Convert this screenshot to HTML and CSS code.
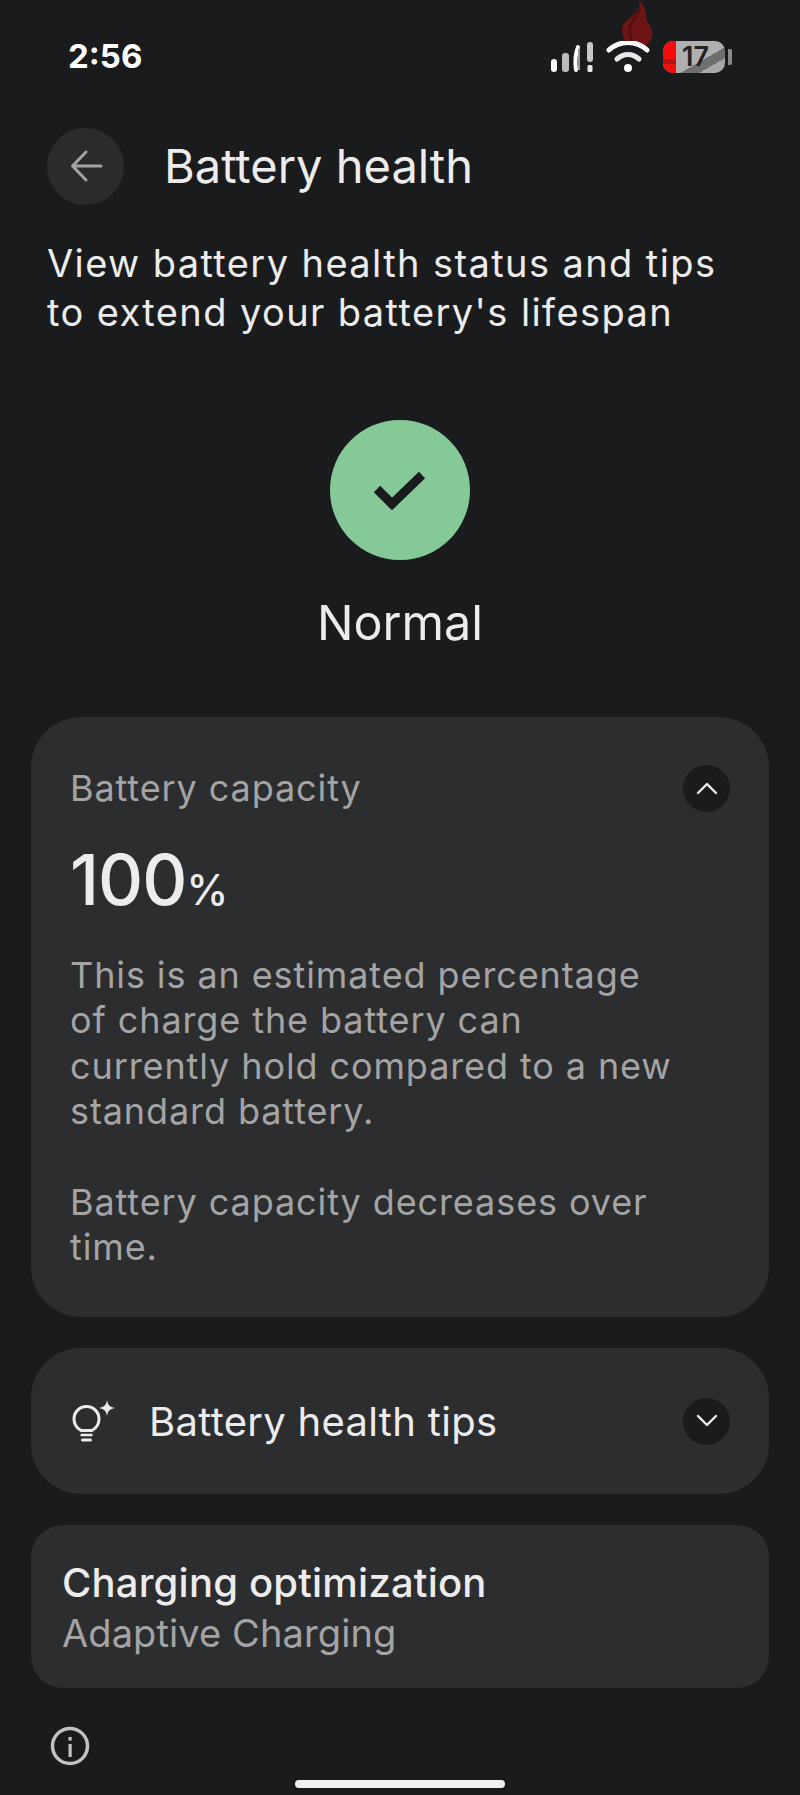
FILE: index.html
```html
<!DOCTYPE html>
<html lang="en">
<head>
<meta charset="utf-8">
<title>Battery health</title>
<link rel="stylesheet" href="styles.css">
</head>
<body>
<div class="screen">
  <div class="status">
    <span class="time">2:56</span>
    <div class="status-icons">
      <svg class="signal" width="44" height="32" viewBox="0 0 44 32">
        <rect x="1" y="18" width="6" height="13" rx="3" fill="#fff"/>
        <rect x="12" y="12" width="7" height="19" rx="3" fill="#bbb"/>
        <path d="M28 6C25 14 25 22 26 29" stroke="#fff" stroke-width="4" stroke-linecap="round" fill="none"/>
        <path d="M29 8v21" stroke="#999" stroke-width="2" fill="none"/>
        <rect x="37" y="1" width="6" height="20" rx="3" fill="#c8c8c8"/>
        <rect x="37.500" y="24" width="5" height="7" rx="1.500" fill="#e8e8e8"/>
      </svg>
      <div class="wifi-wrap">
        <svg class="flame" width="32" height="46" viewBox="0 0 32 46">
          <path d="M18 0c2 7-1 11-7 16C5 21 0 25 1 31c.5 4 2 9 5 14h20c4-4 6-9 5-14-1-5-5-8-6-13 1-5-2-13-7-18z" fill="#6e1414"/>
          <path d="M18 9c0 6-7 11-9 18-1 5 0 9 2 13" stroke="#521010" stroke-width="2.500" fill="none"/>
        </svg>
        <svg class="wifi" width="44" height="32" viewBox="0 0 44 32">
          <path d="M3 9C14-1 30-1 41 9" stroke="#fff" stroke-width="5" stroke-linecap="round" fill="none"/>
          <path d="M11 18c7-6 15-6 22 0" stroke="#e8e8e8" stroke-width="5" stroke-linecap="round" fill="none"/>
          <circle cx="22" cy="27" r="4" fill="#fff"/>
        </svg>
      </div>
      <div class="battery">
        <div class="battery-body">
          <span class="battery-red"></span>
          <span class="battery-level">17</span>
        </div>
        <span class="battery-tip"></span>
      </div>
    </div>
  </div>

  <header class="appbar">
    <button class="back" aria-label="Back">
      <svg width="36" height="36" viewBox="0 0 36 36">
        <path d="M33 18H5M18 4 4.500 18 18 32" stroke="#a3a3a3" stroke-width="3" stroke-linecap="round" stroke-linejoin="round" fill="none"/>
      </svg>
    </button>
    <h1 class="title">Battery health</h1>
  </header>

  <p class="intro">View battery health status and tips<br>to extend your battery's lifespan</p>

  <div class="state">
    <div class="state-badge">
      <svg width="54" height="42" viewBox="0 0 54 42">
        <path d="M4 20 19 35 49 6" stroke="#1a1b1d" stroke-width="9" fill="none"/>
      </svg>
    </div>
    <div class="state-label">Normal</div>
  </div>

  <section class="card capacity">
    <div class="capacity-head">
      <span class="capacity-title">Battery capacity</span>
      <span class="chevron">
        <svg width="22" height="14" viewBox="0 0 22 14"><path d="M2 12 11 3l9 9" stroke="#f2f2f2" stroke-width="2.400" stroke-linecap="round" stroke-linejoin="round" fill="none"/></svg>
      </span>
    </div>
    <div class="capacity-value">100<span class="pct">%</span></div>
    <p class="capacity-text">This is an estimated percentage<br>of charge the battery can<br>currently hold compared to a new<br>standard battery.</p>
    <p class="capacity-text capacity-note">Battery capacity decreases over<br>time.</p>
  </section>

  <section class="card tips">
    <svg class="bulb" width="46" height="46" viewBox="0 0 46 46">
      <path d="M10 32.500C5.500 30 3 25.800 3 21A12.500 12.500 0 0 1 28 21C28 25.800 25.500 30 21 32.500Z" stroke="#ececec" stroke-width="3" stroke-linejoin="round" fill="none"/>
      <path d="M9.500 37h12" stroke="#ececec" stroke-width="2.500"/>
      <path d="M11.500 42h8" stroke="#ececec" stroke-width="3" stroke-linecap="round"/>
      <path d="M36 2c.9 5 2.500 6.800 8 8-5.500 1.200-7.100 3-8 8-.9-5-2.500-6.800-8-8 5.500-1.200 7.100-3 8-8z" fill="#ececec"/>
    </svg>
    <span class="tips-title">Battery health tips</span>
    <span class="chevron">
      <svg width="22" height="14" viewBox="0 0 22 14"><path d="M2 2l9 9 9-9" stroke="#f2f2f2" stroke-width="2.400" stroke-linecap="round" stroke-linejoin="round" fill="none"/></svg>
    </span>
  </section>

  <section class="card optimization">
    <div class="opt-title">Charging optimization</div>
    <div class="opt-sub">Adaptive Charging</div>
  </section>

  <div class="footer">
    <svg width="42" height="42" viewBox="0 0 42 42">
      <circle cx="21" cy="21" r="17.500" stroke="#c2c2c2" stroke-width="3.500" fill="none"/>
      <rect x="19.500" y="19" width="3.200" height="13" fill="#c2c2c2"/>
      <rect x="19.500" y="12" width="3.200" height="3.600" fill="#c2c2c2"/>
    </svg>
  </div>
  <div class="home-bar"></div>
</div>
</body>
</html>
```
FILE: styles.css
```css
* { box-sizing: border-box; }
html, body { margin: 0; padding: 0; }
body {
  background: #1a1b1d;
  font-family: Inter, "Open Sans", sans-serif;
  color: #e9e9e9;
}
.screen {
  width: 800px;
  height: 1795px;
  overflow: hidden;
  background: #1a1b1d;
  display: flex;
  flex-direction: column;
}
.status {
  height: 127px;
  padding: 32px 68px 0 68px;
  display: flex;
  justify-content: space-between;
  align-items: flex-start;
}
.time {
  font-size: 33px;
  font-weight: 700;
  line-height: 48px;
  color: #fff;
}
.status-icons { display: flex; align-items: flex-end; gap: 8px; height: 41px; }
.wifi-wrap { position: relative; width: 44px; height: 32px; margin: 0 5px 0 4px; }
.wifi { display: block; position: relative; }
.flame { position: absolute; left: 15px; top: -41px; }
.battery { display: flex; align-items: center; gap: 3px; }
.battery-body {
  width: 62px;
  height: 32px;
  border-radius: 10px;
  background: linear-gradient(150deg, #b0b0b0 62%, #6f6f6f 62%, #6f6f6f 78%, #a8a8a8 78%);
  display: flex;
  align-items: center;
  overflow: hidden;
}
.battery-red { width: 13px; height: 100%; background: linear-gradient(#f40d0d 55%, #b51212 55%, #b51212 72%, #f40d0d 72%); }
.battery-level {
  flex: 1;
  text-align: left;
  padding-left: 6px;
  font-size: 27px;
  font-weight: 600;
  line-height: 32px;
  color: #222;
}
.battery-tip { width: 4px; height: 16px; background: #8a8a8a; border-radius: 0 2px 2px 0; }
.appbar {
  display: flex;
  align-items: center;
  padding-left: 47px;
  gap: 40px;
  height: 78px;
}
.back {
  width: 77px;
  height: 77px;
  border: 0;
  padding: 0;
  border-radius: 50%;
  background: #2a2b2d;
  display: flex;
  align-items: center;
  justify-content: center;
}
.title { margin: 0; font-size: 47px; line-height: 78px; font-weight: 400; color: #ececec; }
.intro {
  margin: 34px 0 0;
  padding-left: 47px;
  font-size: 38px;
  line-height: 49px;
  letter-spacing: 1.4px;
  color: #ececec;
}
.state {
  margin-top: 83px;
  display: flex;
  flex-direction: column;
  align-items: center;
}
.state-badge {
  width: 140px;
  height: 140px;
  margin-right: 1px;
  border-radius: 50%;
  background: #85c999;
  display: flex;
  align-items: center;
  justify-content: center;
}
.state-label { margin-top: 32px; font-size: 48.500px; line-height: 62px; color: #ececec; }
.card { margin: 0 31px; background: #2c2d2f; }
.capacity {
  margin-top: 63px;
  height: 600px;
  border-radius: 50px;
  padding: 47px 39px 0 39px;
}
.capacity-head { display: flex; justify-content: space-between; align-items: center; height: 48px; }
.capacity-title { font-size: 36px; letter-spacing: 0.9px; color: #a4a4a5; }
.chevron {
  width: 47px;
  height: 47px;
  border-radius: 50%;
  background: #1a1b1d;
  display: flex;
  align-items: center;
  justify-content: center;
  flex: none;
}
.capacity-value { margin-top: 23px; font-size: 70px; line-height: 90px; font-weight: 500; color: #ececec; letter-spacing: -1px; }
.pct { font-size: 42px; letter-spacing: 0; }
.capacity-text { margin: 18px 0 0; font-size: 36px; line-height: 45.400px; letter-spacing: 0.9px; color: #a4a4a5; }
.capacity-note { margin-top: 45px; }
.tips {
  margin-top: 31px;
  height: 146px;
  border-radius: 50px;
  padding: 0 39px 0 40px;
  display: flex;
  align-items: center;
}
.bulb { flex: none; }
.tips-title { flex: 1; margin-left: 32px; font-size: 40px; letter-spacing: 0.3px; color: #ececec; }
.optimization {
  margin-top: 31px;
  height: 163px;
  border-radius: 32px;
  padding: 33px 31px 0;
}
.opt-title { font-size: 40px; line-height: 50px; letter-spacing: 0.2px; font-weight: 500; color: #ececec; }
.opt-sub { font-size: 38px; line-height: 50px; letter-spacing: 0.1px; color: #a4a4a5; }
.footer { margin: 37px 0 0 49px; height: 42px; }
.footer svg { display: block; }
.home-bar {
  width: 210px;
  height: 8px;
  margin: 13px auto 0;
  border-radius: 4px;
  background: #f0f0f0;
}
```
